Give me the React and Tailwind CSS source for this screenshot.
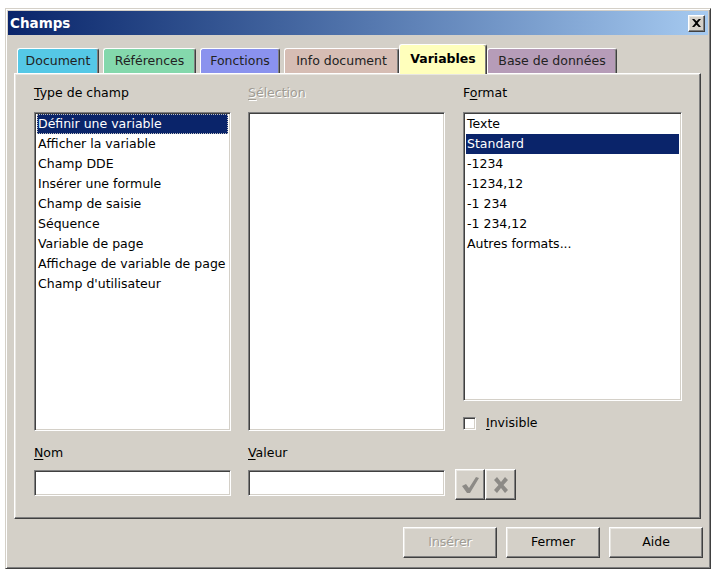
import React from "react";

const font = { fontFamily: '"DejaVu Sans", Verdana, sans-serif' };

const sunken =
  "border border-t-[#808080] border-l-[#808080] border-b-white border-r-white shadow-[inset_1px_1px_0_#404040,inset_-1px_-1px_0_#d4d0c8]";
const raised =
  "border border-t-white border-l-white border-b-[#404040] border-r-[#404040] shadow-[inset_-1px_-1px_0_#808080,inset_1px_1px_0_#e8e6e1]";

function U({ children }) {
  return <span className="underline underline-offset-2">{children}</span>;
}

function Tab({ label, bg, active, w }) {
  return (
    <div
      className={`flex items-center justify-center rounded-t-[3px] border border-b-0 border-t-white border-l-white border-r-[#404040] shadow-[inset_-1px_0_0_#808080] ${
        active ? "h-[30px] -mb-[1px] z-10 font-bold text-black" : "h-[25px] text-[#222]"
      }`}
      style={{ width: w, background: bg }}
    >
      {label}
    </div>
  );
}

function ListBox({ items, selected, focus, className }) {
  return (
    <div className={`bg-white ${sunken} ${className} pt-[1px] px-[2px]`}>
      {items.map((t, i) => (
        <div
          key={i}
          className={`h-[20px] leading-[20px] pl-[1px] whitespace-nowrap ${
            i === selected ? "bg-[#0a246a] text-white" : "text-black"
          } ${i === selected && focus ? "outline-1 outline-dotted outline-[#c0c0c0] -outline-offset-1" : ""}`}
        >
          {t}
        </div>
      ))}
    </div>
  );
}

function Btn({ children, disabled, w }) {
  return (
    <div
      className={`h-[31px] flex items-center justify-center bg-[#d4d0c8] ${raised} ${
        disabled ? "text-[#a09c94] [text-shadow:1px_1px_0_#fff]" : "text-black"
      }`}
      style={{ width: w }}
    >
      {children}
    </div>
  );
}

export default function App() {
  return (
    <div className="w-[714px] h-[570px] bg-white pt-[8px] pl-[5px] text-[12.5px]" style={font}>
      <div className="w-[706px] h-[561px] bg-[#d4d0c8] border border-t-[#d4d0c8] border-l-[#d4d0c8] border-b-[#404040] border-r-[#404040] shadow-[inset_1px_1px_0_#fff,inset_-1px_-1px_0_#808080] p-[2px] flex flex-col">
        {/* Title bar */}
        <div className="h-[24px] flex items-center justify-between pl-[2px] pr-[3px] bg-gradient-to-r from-[#0a246a] to-[#a6caf0]">
          <span className="text-white font-bold text-[13.5px]">Champs</span>
          <div className={`w-[17px] h-[17px] bg-[#d4d0c8] ${raised} flex items-center justify-center`}>
            <svg width="9" height="8" viewBox="0 0 8 7">
              <path d="M0 0h2l2 2 2-2h2L5 3.5 8 7H6L4 5 2 7H0l3-3.5z" fill="#000" />
            </svg>
          </div>
        </div>

        {/* Tabs */}
        <div className="flex items-end pl-[9px] mt-[8px] h-[30px]">
          <Tab label="Document" bg="#55c8e6" w={82} />
          <div className="w-[4px]" />
          <Tab label="Références" bg="#84d8ac" w={93} />
          <div className="w-[4px]" />
          <Tab label="Fonctions" bg="#8a92ee" w={80} />
          <div className="w-[4px]" />
          <Tab label="Info document" bg="#d6bdb4" w={115} />
          <Tab label="Variables" bg="#ffffbc" w={88} active />
          <Tab label="Base de données" bg="#b69cb8" w={130} />
        </div>

        {/* Panel */}
        <div className={`ml-[6px] w-[687px] h-[446px] bg-[#d4d0c8] ${raised} pl-[19px] pt-[10px] flex flex-col`}>
          <div className="flex gap-[17px]">
            <div className="flex flex-col w-[197px]">
              <div className="h-[20px] text-black"><U>T</U>ype de champ</div>
              <div className="h-[8px]" />
              <ListBox
                className="h-[319px]"
                focus
                selected={0}
                items={[
                  "Définir une variable",
                  "Afficher la variable",
                  "Champ DDE",
                  "Insérer une formule",
                  "Champ de saisie",
                  "Séquence",
                  "Variable de page",
                  "Affichage de variable de page",
                  "Champ d'utilisateur",
                ]}
              />
            </div>
            <div className="flex flex-col w-[197px]">
              <div className="h-[20px] text-[#a09c94] [text-shadow:1px_1px_0_#fff]"><U>S</U>élection</div>
              <div className="h-[8px]" />
              <ListBox className="h-[319px]" items={[]} />
            </div>
            <div className="flex flex-col w-[219px] ml-[1px]">
              <div className="h-[20px] text-black">F<U>o</U>rmat</div>
              <div className="h-[8px]" />
              <ListBox
                className="h-[289px]"
                selected={1}
                items={["Texte", "Standard", "-1234", "-1234,12", "-1 234", "-1 234,12", "Autres formats..."]}
              />
              <div className="flex items-center mt-[15px] h-[15px] gap-[10px]">
                <div className={`w-[13px] h-[13px] bg-white ${sunken}`} />
                <span><U>I</U>nvisible</span>
              </div>
            </div>
          </div>

          <div className="flex gap-[17px] mt-[13px]">
            <div className="flex flex-col w-[197px]">
              <div className="h-[19px]"><U>N</U>om</div>
              <div className="h-[7px]" />
              <div className={`h-[26px] bg-white ${sunken}`} />
            </div>
            <div className="flex items-end gap-[10px]">
              <div className="flex flex-col w-[197px]">
                <div className="h-[19px]"><U>V</U>aleur</div>
                <div className="h-[7px]" />
                <div className={`h-[26px] bg-white ${sunken}`} />
              </div>
              <div className="flex -mb-[4px] shrink-0">
                <div className={`w-[30px] h-[31px] bg-[#d4d0c8] ${raised} flex items-center justify-center`}>
                  <svg width="20" height="18" viewBox="0 0 20 18">
                    <path d="M2 10l4-2 3 4 7-11 3 1-9 15h-3z" fill="#8c8a86" />
                  </svg>
                </div>
                <div className={`w-[31px] h-[31px] bg-[#d4d0c8] ${raised} flex items-center justify-center`}>
                  <svg width="18" height="18" viewBox="0 0 18 18">
                    <path d="M2 4l3-3 4 5 4-5 3 3-4.5 5 4.5 5-3 3-4-5-4 5-3-3 4.5-5z" fill="#8c8a86" />
                  </svg>
                </div>
              </div>
            </div>
          </div>
        </div>

        {/* Buttons */}
        <div className="flex justify-end gap-[9px] mt-[8px] pr-[5px]">
          <Btn disabled w={94}>Insérer</Btn>
          <Btn w={94}>Fermer</Btn>
          <Btn w={94}>Aide</Btn>
        </div>
      </div>
    </div>
  );
}
